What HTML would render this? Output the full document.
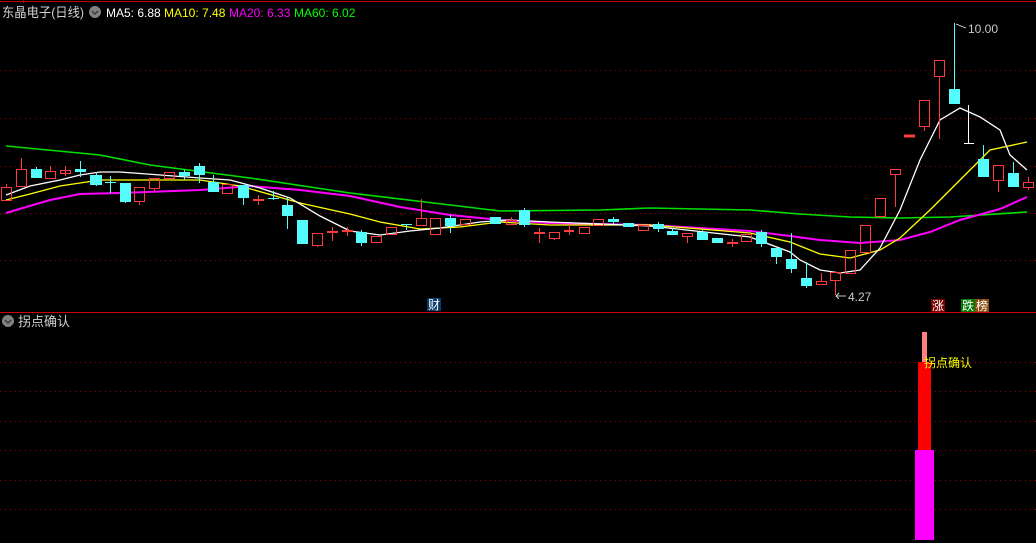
<!DOCTYPE html>
<html><head><meta charset="utf-8"><style>
html,body{margin:0;padding:0;background:#000;width:1036px;height:543px;overflow:hidden}
svg{display:block}
text{font-family:"Liberation Sans","Noto Sans CJK SC",sans-serif}
</style></head><body>
<svg width="1036" height="543" xmlns="http://www.w3.org/2000/svg" shape-rendering="crispEdges">
<rect width="1036" height="543" fill="#000"/>
<line x1="0" y1="1.5" x2="1036" y2="1.5" stroke="#c00000" stroke-width="1"/>
<line x1="23.5" y1="0" x2="23.5" y2="3" stroke="#c00000"/>
<g stroke="#a00000" stroke-dasharray="1 4">
<line x1="0" y1="70.5" x2="1036" y2="70.5"/><line x1="0" y1="118.5" x2="1036" y2="118.5"/>
<line x1="0" y1="166.5" x2="1036" y2="166.5"/><line x1="0" y1="213.5" x2="1036" y2="213.5"/>
<line x1="0" y1="260.5" x2="1036" y2="260.5"/>
<line x1="0" y1="362.5" x2="1036" y2="362.5"/><line x1="0" y1="391.5" x2="1036" y2="391.5"/>
<line x1="0" y1="421.5" x2="1036" y2="421.5"/><line x1="0" y1="450.5" x2="1036" y2="450.5"/>
<line x1="0" y1="480.5" x2="1036" y2="480.5"/><line x1="0" y1="509.5" x2="1036" y2="509.5"/>
</g>
<line x1="0" y1="312.5" x2="1036" y2="312.5" stroke="#d00000"/>

<g fill="none" stroke-width="1.3" shape-rendering="auto">
<polyline stroke="#00e000" stroke-width="1.6" points="6,146 100,155 150,165 250,178 350,193 450,205 500,211 600,210 650,208 750,210 800,214 850,217 900,218 950,217 1027,212"/>
<polyline stroke="#ff00ff" stroke-width="2" points="6,213 50,200 80,194 120,193 200,190 250,186 300,190 350,196 400,207 450,215 500,220 550,223 650,225 750,231 790,236 820,240 860,243 900,240 930,232 960,220 1000,209 1027,197"/>
<polyline stroke="#ffff00" points="6,200 30,194 60,186 100,180 150,180 200,180 240,186 300,203 350,214 380,222 420,229 460,227 500,222 550,225 650,225 750,233 790,242 820,254 850,258 880,250 900,238 930,210 960,180 990,150 1027,142"/>
<polyline stroke="#ffffff" points="6,195 30,186 60,180 80,175 100,172 120,172 200,178 230,180 260,188 290,198 320,216 350,231 380,235 410,231 440,228 480,222 510,220 550,222 650,226 750,237 790,252 800,260 820,270 840,273 860,270 880,248 900,210 920,160 940,120 960,108 980,117 1000,130 1010,155 1027,170"/>
</g>

<g stroke="#ff3b3b" fill="none">
<rect x="1.5" y="187.5" width="10" height="13"/><line x1="6.5" y1="184" x2="6.5" y2="187"/>
<rect x="16.5" y="169.5" width="10" height="17"/><line x1="21.5" y1="158" x2="21.5" y2="169"/>
<rect x="45.5" y="171.5" width="10" height="7"/><line x1="50.5" y1="166" x2="50.5" y2="171"/>
<rect x="60.5" y="170.5" width="10" height="3"/><line x1="65.5" y1="166" x2="65.5" y2="176"/>
<rect x="134.5" y="187.5" width="10" height="14"/><line x1="139.5" y1="201" x2="139.5" y2="205"/>
<rect x="149.5" y="178.5" width="10" height="10"/><line x1="154.5" y1="188" x2="154.5" y2="191"/>
<rect x="164.5" y="172.5" width="10" height="6"/>
<rect x="222.5" y="184.5" width="10" height="9"/>
<rect x="312.5" y="233.5" width="10" height="12"/><line x1="317.5" y1="245" x2="317.5" y2="247"/>
<rect x="371.5" y="236.5" width="10" height="6"/>
<rect x="386.5" y="227.5" width="10" height="7"/>
<rect x="416.5" y="218.5" width="10" height="7"/><line x1="421.5" y1="199" x2="421.5" y2="218"/>
<rect x="430.5" y="218.5" width="10" height="16"/>
<rect x="460.5" y="219.5" width="10" height="5"/>
<rect x="506.5" y="220.5" width="10" height="4"/><line x1="511.5" y1="217" x2="511.5" y2="220"/>
<rect x="549.5" y="232.5" width="10" height="6"/><line x1="554.5" y1="238" x2="554.5" y2="240"/>
<rect x="579.5" y="227.5" width="10" height="6"/>
<rect x="593.5" y="219.5" width="10" height="6"/>
<rect x="638.5" y="225.5" width="10" height="5"/>
<rect x="682.5" y="233.5" width="10" height="3"/><line x1="687.5" y1="236" x2="687.5" y2="243"/>
<rect x="741.5" y="234.5" width="10" height="7"/>
<rect x="816.5" y="281.5" width="10" height="3"/><line x1="821.5" y1="273" x2="821.5" y2="281"/>
<rect x="830.5" y="272.5" width="10" height="8"/><line x1="835.5" y1="280" x2="835.5" y2="295"/>
<rect x="845.5" y="250.5" width="10" height="23"/>
<rect x="860.5" y="225.5" width="10" height="27"/>
<rect x="875.5" y="198.5" width="10" height="18"/>
<rect x="890.5" y="169.5" width="10" height="5"/><line x1="895.5" y1="174" x2="895.5" y2="207"/>
<rect x="919.5" y="100.5" width="10" height="26"/><line x1="924.5" y1="126" x2="924.5" y2="131"/>
<rect x="934.5" y="60.5" width="10" height="16"/><line x1="939.5" y1="76" x2="939.5" y2="139"/>
<rect x="993.5" y="165.5" width="10" height="15"/><line x1="998.5" y1="180" x2="998.5" y2="192"/>
<rect x="1023.5" y="182.5" width="10" height="5"/><line x1="1028.5" y1="177" x2="1028.5" y2="182"/><line x1="1028.5" y1="187" x2="1028.5" y2="190"/>
</g>
<g stroke="#ff3b3b" stroke-width="2">
<line x1="253" y1="200" x2="264" y2="200"/><line x1="327" y1="232" x2="338" y2="232"/><line x1="342" y1="231" x2="353" y2="231"/>
<line x1="534" y1="233" x2="545" y2="233"/><line x1="564" y1="231" x2="574" y2="231"/><line x1="727" y1="243" x2="738" y2="243"/>
<line x1="904" y1="136" x2="915" y2="136" stroke-width="3"/>
</g>
<g stroke="#ff3b3b">
<line x1="258.5" y1="195" x2="258.5" y2="205"/><line x1="332.5" y1="227" x2="332.5" y2="241"/><line x1="347.5" y1="227" x2="347.5" y2="236"/>
<line x1="539.5" y1="228" x2="539.5" y2="243"/><line x1="569.5" y1="225" x2="569.5" y2="235"/><line x1="732.5" y1="239" x2="732.5" y2="247"/>
</g>
<g fill="#54fcfc" stroke="none">
<rect x="31" y="169" width="11" height="9"/>
<rect x="75" y="169" width="11" height="3"/>
<rect x="90" y="175" width="12" height="10"/>
<rect x="120" y="183" width="11" height="19"/>
<rect x="179" y="172" width="11" height="4"/>
<rect x="194" y="166" width="11" height="9"/>
<rect x="208" y="182" width="11" height="10"/>
<rect x="238" y="185" width="11" height="13"/>
<rect x="282" y="205" width="11" height="11"/>
<rect x="297" y="220" width="11" height="24"/>
<rect x="356" y="232" width="11" height="11"/>
<rect x="445" y="218" width="11" height="8"/>
<rect x="490" y="217" width="11" height="7"/>
<rect x="519" y="210" width="11" height="15"/>
<rect x="608" y="219" width="11" height="3"/>
<rect x="623" y="223" width="11" height="4"/>
<rect x="653" y="224" width="11" height="5"/>
<rect x="667" y="231" width="11" height="4"/>
<rect x="697" y="232" width="11" height="8"/>
<rect x="712" y="238" width="11" height="5"/>
<rect x="756" y="232" width="11" height="12"/>
<rect x="771" y="248" width="11" height="9"/>
<rect x="786" y="259" width="11" height="10"/>
<rect x="801" y="278" width="11" height="8"/>
<rect x="949" y="89" width="11" height="15"/>
<rect x="978" y="159" width="11" height="18"/>
<rect x="1008" y="173" width="11" height="14"/>
<rect x="105" y="182" width="11" height="1"/><rect x="268" y="198" width="11" height="1"/><rect x="401" y="224" width="11" height="1"/>
</g>
<g stroke="#54fcfc">
<line x1="36.5" y1="167" x2="36.5" y2="169"/><line x1="80.5" y1="161" x2="80.5" y2="177"/><line x1="96.5" y1="172" x2="96.5" y2="186"/>
<line x1="110.5" y1="176" x2="110.5" y2="193"/><line x1="125.5" y1="202" x2="125.5" y2="203"/><line x1="184.5" y1="170" x2="184.5" y2="180"/>
<line x1="199.5" y1="163" x2="199.5" y2="183"/><line x1="213.5" y1="175" x2="213.5" y2="192"/><line x1="243.5" y1="198" x2="243.5" y2="205"/>
<line x1="273.5" y1="191" x2="273.5" y2="200"/><line x1="287.5" y1="198" x2="287.5" y2="229"/><line x1="361.5" y1="230" x2="361.5" y2="246"/>
<line x1="406.5" y1="224" x2="406.5" y2="230"/><line x1="450.5" y1="215" x2="450.5" y2="233"/><line x1="524.5" y1="208" x2="524.5" y2="227"/>
<line x1="613.5" y1="217" x2="613.5" y2="224"/><line x1="658.5" y1="222" x2="658.5" y2="232"/><line x1="672.5" y1="228" x2="672.5" y2="235"/>
<line x1="702.5" y1="230" x2="702.5" y2="240"/><line x1="761.5" y1="230" x2="761.5" y2="247"/><line x1="776.5" y1="257" x2="776.5" y2="264"/>
<line x1="791.5" y1="233" x2="791.5" y2="273"/><line x1="806.5" y1="262" x2="806.5" y2="288"/><line x1="954.5" y1="23" x2="954.5" y2="89"/>
<line x1="983.5" y1="145" x2="983.5" y2="159"/><line x1="1013.5" y1="162" x2="1013.5" y2="173"/>
</g>
<g stroke="#fff"><line x1="968.5" y1="105" x2="968.5" y2="143"/><line x1="964" y1="143.5" x2="974" y2="143.5"/></g>

<g fill="#c8c8c8" font-size="12">
<text x="968" y="33">10.00</text><text x="848" y="301">4.27</text>
</g>
<g stroke="#c8c8c8" fill="none"><path d="M956 24 L966 28"/><path d="M836 296 L846 296 M836 296 L839 293 M836 296 L839 299"/></g>
<rect x="427" y="298" width="14" height="13" fill="#0a3a6a"/><text x="428" y="309" font-size="12" fill="#fff">财</text>
<rect x="931" y="299" width="14" height="13" fill="#7a0000"/><text x="932" y="310" font-size="12" fill="#fff">涨</text>
<rect x="961" y="299" width="14" height="13" fill="#007a00"/><text x="962" y="310" font-size="12" fill="#fff">跌</text>
<rect x="975" y="299" width="14" height="13" fill="#8a4a10"/><text x="976" y="310" font-size="12" fill="#fff">榜</text>

<text x="2" y="17" font-size="13" fill="#d0d0d0" textLength="82" lengthAdjust="spacingAndGlyphs">东晶电子(日线)</text>
<circle cx="95" cy="12" r="6" fill="#808080"/><path d="M92 11 L95 14 L98 11" stroke="#222" fill="none" shape-rendering="auto"/>
<g font-size="12"><text x="106" y="17" fill="#fff">MA5: 6.88</text><text x="164" y="17" fill="#ffff00">MA10: 7.48</text>
<text x="229" y="17" fill="#ff00ff">MA20: 6.33</text><text x="294" y="17" fill="#00ff00">MA60: 6.02</text></g>

<circle cx="8" cy="321" r="6" fill="#808080"/><path d="M5 320 L8 323 L11 320" stroke="#222" fill="none" shape-rendering="auto"/>
<text x="18" y="326" font-size="13" fill="#d0d0d0">拐点确认</text>
<rect x="922" y="332" width="5" height="30" fill="#ff8080"/>
<rect x="918" y="362" width="13" height="88" fill="#ff0000"/>
<rect x="915" y="450" width="19" height="90" fill="#ff00ff"/>
<text x="924" y="367" font-size="12" fill="#ffff00">拐点确认</text>
</svg>
</body></html>
